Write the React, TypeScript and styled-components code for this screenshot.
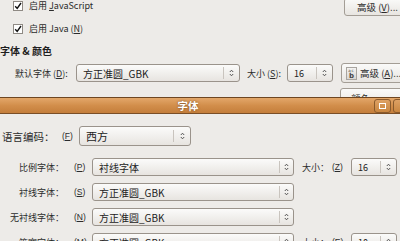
import React from "react";
import styled, { createGlobalStyle } from "styled-components";

const Global = createGlobalStyle`
  html, body { margin: 0; padding: 0; }
  body {
    background: #edebe8;
    width: 400px;
    height: 241px;
    overflow: hidden;
    font-family: "Liberation Sans", "Noto Sans CJK SC", sans-serif;
    color: #2b2b2b;
  }
`;

const Screen = styled.div`
  width: 400px;
  height: 241px;
  overflow: hidden;
  display: flex;
  flex-direction: column;
`;

const MainWin = styled.div`
  width: 420px;
  height: 97px;
  flex: none;
  overflow: hidden;
  display: flex;
  flex-direction: column;
`;

const TopRow = styled.div`
  display: flex;
  align-items: flex-start;
  height: 16px;
  padding-left: 13px;
`;

const CheckRow = styled.div<{ $mt?: number }>`
  display: flex;
  align-items: center;
  height: 12px;
  padding-left: 13px;
  margin-top: ${(p) => p.$mt ?? 0}px;
`;

const CheckLabel = styled.label`
  display: flex;
  align-items: center;
  gap: 6px;
  font-size: 9px;
  line-height: 12px;
  height: 12px;
`;

const Box = styled.span`
  width: 8px;
  height: 8px;
  border: 1px solid #8f8a84;
  background: #fff;
  display: flex;
  align-items: center;
  justify-content: center;
`;

const Spacer = styled.div`
  flex: 1;
`;

const Button = styled.div<{ $h?: number; $mt?: number; $w?: number; $pl?: number }>`
  display: flex;
  align-items: center;
  gap: 3px;
  flex: none;
  white-space: nowrap;
  width: ${(p) => p.$w ?? 70}px;
  height: ${(p) => p.$h ?? 22}px;
  margin-top: ${(p) => p.$mt ?? 0}px;
  box-sizing: border-box;
  padding-left: ${(p) => p.$pl ?? 10}px;
  border: 1px solid #a39d95;
  border-radius: 3px;
  background: linear-gradient(#fafaf9, #e8e5e1);
  font-size: 9.5px;
  font-family: "Noto Sans CJK SC", sans-serif;
  color: #2b2b2b;
`;

const BtnText = styled.span`
  white-space: nowrap;
`;

const SectionTitle = styled.div`
  margin-top: 10px;
  height: 12px;
  line-height: 12px;
  font-size: 10px;
  font-weight: bold;
  font-family: "Noto Sans CJK SC", sans-serif;
  color: #1e1e1e;
`;

const FontRow = styled.div`
  margin-top: 6px;
  height: 20px;
  display: flex;
  align-items: center;
  padding-left: 15px;
`;

const Text = styled.span<{ $w?: number; $ml?: number; $size?: number }>`
  flex: none;
  width: ${(p) => (p.$w ? `${p.$w}px` : "auto")};
  margin-left: ${(p) => p.$ml ?? 0}px;
  font-size: ${(p) => p.$size ?? 9}px;
  font-family: "Noto Sans CJK SC", sans-serif;
  white-space: nowrap;
  color: #2b2b2b;
`;

const Combo = styled.div<{ $w: number; $h?: number }>`
  flex: none;
  box-sizing: border-box;
  width: ${(p) => p.$w}px;
  height: ${(p) => p.$h ?? 18}px;
  border: 1px solid #9a938b;
  border-radius: 3px;
  background: linear-gradient(#fbfbfa, #e7e4e0);
  display: flex;
  align-items: center;
  padding-left: 6px;
  font-family: "Noto Sans CJK SC", sans-serif;
  color: #222;
`;

const ComboText = styled.span<{ $size?: number }>`
  flex: 1;
  white-space: nowrap;
  overflow: hidden;
  font-size: ${(p) => p.$size ?? 10}px;
`;

const ArrowZone = styled.span<{ $w: number }>`
  flex: none;
  width: ${(p) => p.$w}px;
  height: 70%;
  border-left: 1px solid #c9c4be;
  display: flex;
  align-items: center;
  justify-content: center;
`;

const NextRow = styled.div`
  margin-top: 5px;
  display: flex;
  padding-left: 340px;
`;

const Dialog = styled.div`
  flex: 1;
  display: flex;
  flex-direction: column;
`;

const TitleBar = styled.div`
  height: 17px;
  box-sizing: border-box;
  border-top: 1px solid #6e4622;
  border-bottom: 1px solid #7a4e26;
  background: linear-gradient(#e3a76a, #d28e4b 50%, #c47e3b);
  display: flex;
  align-items: center;
`;

const Title = styled.div`
  flex: 1;
  text-align: center;
  padding-left: 4px;
  font-size: 10.5px;
  font-weight: bold;
  color: #fff;
  font-family: "Noto Sans CJK SC", sans-serif;
  text-shadow: 0 0 2px #6a3d15;
`;

const TitleBtn = styled.div<{ $mr?: number }>`
  flex: none;
  width: 17px;
  height: 14px;
  box-sizing: border-box;
  margin-left: 2px;
  margin-right: ${(p) => p.$mr ?? 0}px;
  border: 1px solid #8a5a2c;
  border-radius: 3px;
  background: linear-gradient(#dea164, #c98640);
  display: flex;
  align-items: center;
  justify-content: center;
`;

const MaxGlyph = styled.span`
  width: 5px;
  height: 4px;
  border: 1.5px solid #fff;
`;

const Body = styled.div`
  padding-top: 12px;
  display: flex;
  flex-direction: column;
`;

const LangRow = styled.div`
  display: flex;
  align-items: center;
  padding-left: 2px;
  height: 20px;
`;

const Rows = styled.div`
  margin-top: 12px;
  display: flex;
  flex-direction: column;
  gap: 7px;
`;

const FRow = styled.div`
  display: flex;
  align-items: center;
  height: 18px;
`;

const RLabel = styled.span`
  flex: none;
  width: 64px;
  text-align: right;
  font-size: 9px;
  font-family: "Noto Sans CJK SC", sans-serif;
  white-space: nowrap;
  color: #2b2b2b;
`;

const Mnem = styled.span<{ $w: number; $pl?: number }>`
  flex: none;
  box-sizing: border-box;
  width: ${(p) => p.$w}px;
  padding-left: ${(p) => p.$pl ?? 0}px;
  font-size: 8.5px;
  font-family: "Liberation Sans", sans-serif;
  color: #2b2b2b;
`;

const FontIcon = styled.span`
  flex: none;
  width: 11px;
  height: 13px;
  margin-left: -6px;
  box-sizing: border-box;
  border: 1px solid #a8a49f;
  background: linear-gradient(#f4f3f1, #d9d6d2);
  display: flex;
  flex-direction: column;
  align-items: center;
  font-family: "DejaVu Sans", sans-serif;
  color: #444;
  line-height: 1;
`;

const IconSmall = styled.span`
  font-size: 4px;
  margin-top: 1px;
  letter-spacing: 1px;
`;

const IconBig = styled.span`
  font-size: 7px;
  font-weight: bold;
`;

const ButtonGap = styled.div`
  width: 8px;
  flex: none;
`;

const UpDown = () => (
  <svg width="5" height="8" viewBox="0 0 5 8">
    <path d="M0.8 3 L2.5 1.2 L4.2 3 M0.8 5 L2.5 6.8 L4.2 5" fill="none" stroke="#444" strokeWidth="0.9" />
  </svg>
);

const Tick = () => (
  <svg width="8" height="8" viewBox="0 0 8 8">
    <path d="M1.2 4.2 L3.2 6.4 L7 1" fill="none" stroke="#111" strokeWidth="1.4" />
  </svg>
);

type ComboProps = { w: number; text: string; arrow?: number; h?: number; size?: number };
const Select = ({ w, text, arrow = 13, h, size }: ComboProps) => (
  <Combo $w={w} $h={h}>
    <ComboText $size={size}>{text}</ComboText>
    <ArrowZone $w={arrow}>
      <UpDown />
    </ArrowZone>
  </Combo>
);

const fontRows = [
  { label: "比例字体：", m: "P", font: "衬线字体", size: { label: "大小：", m: "Z", v: "16" } },
  { label: "衬线字体：", m: "S", font: "方正准圆_GBK" },
  { label: "无衬线字体：", m: "N", font: "方正准圆_GBK" },
  { label: "等宽字体：", m: "M", font: "方正准圆_GBK", size: { label: "大小：", m: "E", v: "10" } },
];

export default function App() {
  return (
    <Screen>
      <Global />
      <MainWin>
        <TopRow>
          <CheckLabel>
            <Box><Tick /></Box>
            <Text>
              启用 <u>J</u>avaScript
            </Text>
          </CheckLabel>
          <Spacer />
          <Button $h={18} $mt={-2} $w={76} $pl={12}>
            <BtnText>
              高级 (<u>V</u>)...
            </BtnText>
          </Button>
        </TopRow>
        <CheckRow $mt={7}>
          <CheckLabel>
            <Box><Tick /></Box>
            <Text>
              启用 Java (<u>N</u>)
            </Text>
          </CheckLabel>
        </CheckRow>
        <SectionTitle>字体 &amp; 颜色</SectionTitle>
        <FontRow>
          <Text $w={61}>
            默认字体 (<u>D</u>):
          </Text>
          <Select w={164} text="方正准圆_GBK" arrow={15} />
          <Text $ml={7} $w={40}>
            大小 (<u>S</u>):
          </Text>
          <Select w={46} text="16" arrow={15} size={9} />
          <ButtonGap />
          <Button $w={80} $h={20}>
            <FontIcon>
              <IconSmall>ac</IconSmall>
              <IconBig>b</IconBig>
            </FontIcon>
            <BtnText>
              高级 (<u>A</u>)...
            </BtnText>
          </Button>
        </FontRow>
        <NextRow>
          <Button $w={80} $h={20}>
            <BtnText>颜色</BtnText>
          </Button>
        </NextRow>
      </MainWin>
      <Dialog>
        <TitleBar>
          <Title>字体</Title>
          <TitleBtn>
            <MaxGlyph />
          </TitleBtn>
          <TitleBtn $mr={-10} />
        </TitleBar>
        <Body>
          <LangRow>
            <Text $size={10.5} $w={60}>语言编码：</Text>
            <Mnem $w={17}>
              (<u>F</u>)
            </Mnem>
            <Select w={112} h={20} text="西方" arrow={16} size={11} />
          </LangRow>
          <Rows>
            {fontRows.map((r) => (
              <FRow key={r.m}>
                <RLabel>{r.label}</RLabel>
                <Mnem $w={28} $pl={10}>
                  (<u>{r.m}</u>)
                </Mnem>
                <Select w={202} text={r.font} arrow={13} />
                {r.size && (
                  <>
                    <Text $ml={8} $w={30}>{r.size.label}</Text>
                    <Mnem $w={19}>
                      (<u>{r.size.m}</u>)
                    </Mnem>
                    <Select w={46} text={r.size.v} arrow={15} size={9} />
                  </>
                )}
              </FRow>
            ))}
          </Rows>
        </Body>
      </Dialog>
    </Screen>
  );
}
